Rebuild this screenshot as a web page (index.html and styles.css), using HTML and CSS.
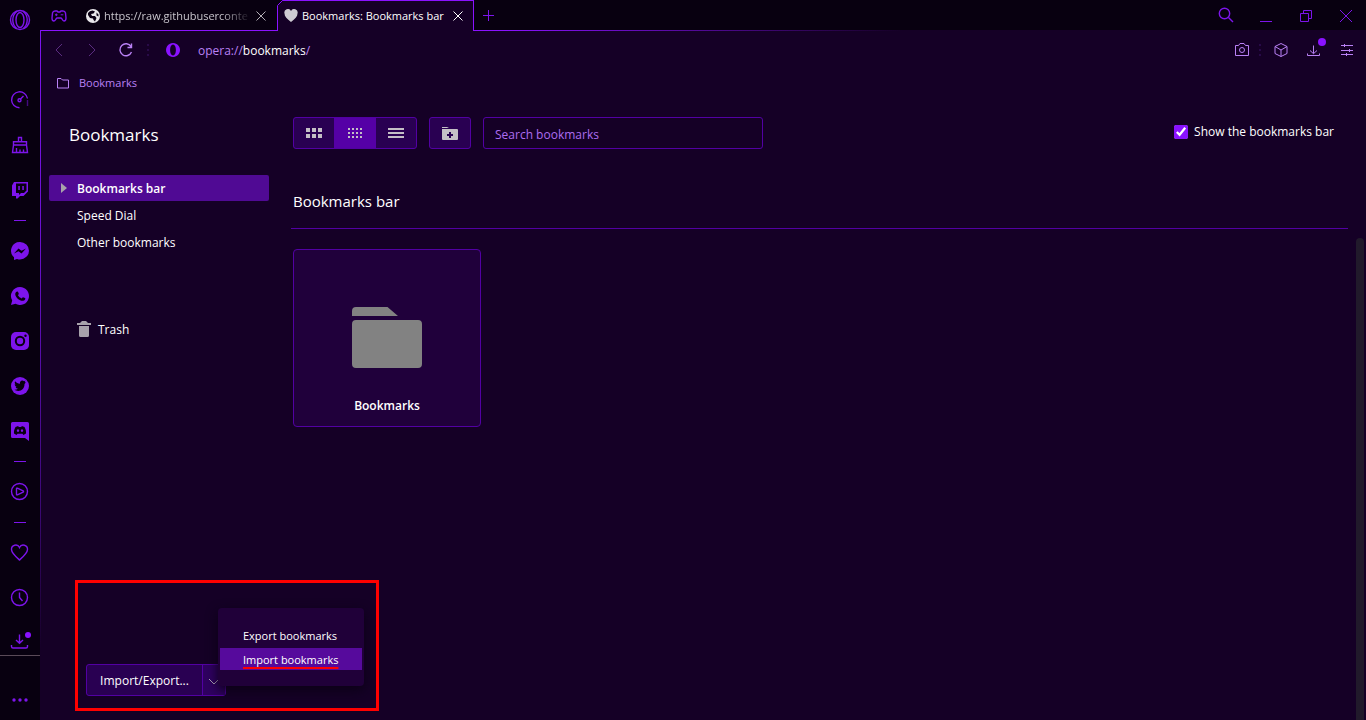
FILE: index.html
```html
<!DOCTYPE html>
<html lang="en">
<head>
<meta charset="utf-8">
<title>Bookmarks: Bookmarks bar</title>
<link rel="stylesheet" href="styles.css">
</head>
<body>
<div class="browser">
  <aside class="rail" aria-label="Sidebar">
    <button class="rail-btn rail-logo" aria-label="Opera menu"><svg width="22" height="22" viewBox="0 0 22 22"><circle cx="11" cy="11" r="9.500"/><ellipse cx="11" cy="11" rx="4" ry="7.500"/><path d="M8 2.200C5 4.500 3.800 7.500 3.800 11S5 17.500 8 19.800M14 2.200c3 2.300 4.200 5.300 4.200 8.800s-1.200 6.500-4.200 8.800"/></svg></button>
    <button class="rail-btn" aria-label="GX Control"><svg width="20" height="20" viewBox="0 0 20 20"><path d="M9.500 17.800A8 8 0 1 1 17.500 8.500M10.500 9l3-3"/><circle cx="9.500" cy="10.200" r="1.500"/><path d="M17.500 10.500v5" stroke-dasharray="1 1"/></svg></button>
    <button class="rail-btn" aria-label="GX Cleaner"><svg width="20" height="20" viewBox="0 0 20 20"><path d="M8.500 6.500V2.500h3v4M3.500 10V6.700h13V10zM3.500 10l-1 7.500h15L16.500 10M6.500 13v4.500M10 14.500v3M13.500 14.500v3"/></svg></button>
    <button class="rail-btn" aria-label="Twitch"><svg class="solid" width="20" height="20" viewBox="0 0 20 20"><path fill-rule="evenodd" d="M4 2h14v9.500L13.500 16H10l-2.500 2.500H6V16H2V5.500zM6 3.500V13h3v2l2-2h3l2.500-2.500v-7zM8.300 6h1.500v4H8.300zM12.300 6h1.500v4h-1.500z"/></svg></button>
    <span class="rail-sep"></span>
    <button class="rail-btn" aria-label="Messenger"><svg class="solid" width="20" height="20" viewBox="0 0 20 20"><path d="M10 1a9 8.700 0 0 1 0 17.400q-1.500 0-3-.5L4 19v-2.800A8.700 8.700 0 0 1 10 1z"/><path class="cut" d="M4 12.500l4.500-5 3 2.200L16 7.500l-4.500 5-3-2.200z"/></svg></button>
    <button class="rail-btn" aria-label="WhatsApp"><svg class="solid" width="20" height="20" viewBox="0 0 20 20"><path d="M10 1a9 9 0 1 1-4.500 16.800L1 19l1.200-4.500A9 9 0 0 1 10 1z"/><path class="cut" d="M7 5.500c.7-.2 1 .2 1.200.8l.6 1.500c.1.500-.8 1.200-.8 1.400.8 1.500 2 2.500 3.600 3.200.4 0 .9-1.200 1.400-1.200l2 .9c.5.300.3 1-.1 1.700-1 1.500-3.200 1.200-4.800.4-2-1-3.500-2.500-4.500-4.500-.6-1.500-.5-3.600 1.400-4.200z"/></svg></button>
    <button class="rail-btn" aria-label="Instagram"><svg class="solid" width="20" height="20" viewBox="0 0 20 20"><rect x="1" y="1" width="18" height="18" rx="5"/><circle class="cut" cx="10" cy="10" r="5.200"/><circle cx="10" cy="10" r="3.200"/><circle class="cut" cx="15.500" cy="4.700" r="1.200"/></svg></button>
    <button class="rail-btn" aria-label="Twitter"><svg class="solid" width="20" height="20" viewBox="0 0 20 20"><circle cx="10" cy="10" r="9"/><path class="cut" d="M15.800 6.500l-1.300 1.400c.1 4-2.500 7-6.300 7-1.500 0-2.800-.4-3.900-1.100 1.400.1 2.600-.2 3.700-1-1.200-.1-2-.8-2.300-1.800h1c-1.300-.5-2-1.500-2-2.700l1 .3c-1-1-1.300-2.200-.6-3.400 1.300 1.600 2.800 2.400 4.900 2.500-.4-2 .8-3.300 2.300-3.300.7 0 1.300.3 1.700.8l1.600-.6-.9 1.300z"/></svg></button>
    <button class="rail-btn" aria-label="Discord"><svg class="solid" width="20" height="20" viewBox="0 0 20 20"><path d="M2.500 1h15Q19 1 19 2.500V20l-4-3H2.500Q1 17 1 15.500v-13Q1 1 2.500 1z"/><path class="cut" fill-rule="evenodd" d="M5.500 6l2.700-1 .5.900h2.600l.5-.9 2.700 1c1.300 2.300 1.700 4.300 1.500 6.500L13.500 14l-1-1.200h-5L6.500 14 4 12.500C3.800 10.300 4.200 8.300 5.500 6zM8 8.300a1.200 1.300 0 1 0 .01 0zM12 8.300a1.200 1.300 0 1 0 .01 0z"/></svg></button>
    <span class="rail-sep"></span>
    <button class="rail-btn" aria-label="Player"><svg width="20" height="20" viewBox="0 0 20 20"><circle cx="9.500" cy="9.500" r="8"/><path d="M6.500 6.700v5.600q0 .9.900.5l5.700-2.700q.9-.6 0-1.200L7.400 6.200Q6.500 5.800 6.500 6.700z"/></svg></button>
    <span class="rail-sep"></span>
    <button class="rail-btn" aria-label="Bookmarks"><svg width="20" height="20" viewBox="0 0 20 20"><path d="M9.500 17C5 13 1.500 10 1.500 6.500A4.200 4.200 0 0 1 9.500 4.500a4.200 4.200 0 0 1 8 2c0 3.500-3.500 6.500-8 10.500z"/></svg></button>
    <button class="rail-btn" aria-label="History"><svg width="20" height="20" viewBox="0 0 20 20"><circle cx="9.500" cy="9.500" r="8"/><path d="M9.500 4.500v5l3 3.500"/></svg></button>
    <button class="rail-btn rail-down" aria-label="Downloads"><svg width="22" height="20" viewBox="0 0 22 20"><path d="M10.500 4.500v8.500M7 10l3.500 3.300 3.500-3.300M2.500 15v1.500q0 1.500 1.500 1.500h13q1.500 0 1.500-1.500v-1.500"/><circle class="dot" cx="19" cy="5" r="3"/></svg></button>
    <button class="rail-btn rail-more" aria-label="Sidebar setup"><svg class="solid" width="20" height="20" viewBox="0 0 20 20"><circle cx="4" cy="10" r="1.700"/><circle cx="10" cy="10" r="1.700"/><circle cx="16" cy="10" r="1.700"/></svg></button>
  </aside>

  <div class="window">
    <header class="strip">
      <button class="icon-btn bold corner" aria-label="GX Corner"><svg width="16" height="14" viewBox="0 0 16 14"><path d="M4 2h2l1 1h2l1-1h2q2 0 2.500 2l.5 5q0 3-2 3-1 0-2-2l-1-1H6l-1 1q-1 2-2 2-2 0-2-3l.5-5Q2 2 4 2z"/><path d="M4 5.800h2.600M5.300 4.500v2.600M9.700 5.800h2.600" stroke-width="1"/></svg></button>
      <div class="tab">
        <svg width="14" height="14" viewBox="0 0 14 14"><circle cx="7" cy="7" r="7" fill="#e8e6ea"/><path d="M2 4Q3.500 1.500 6.500 1.500L9 2.500 7.500 4.500 5 5l1 2H9l1.500 2L9 12.500 7.500 11 7 9.500 4 9 2 6zM10.500 3.500l2 2v2l-2-1z" fill="#0a0014"/></svg>
        <a class="tab-title fade" href="#raw">https://raw.githubuserconte</a>
        <button class="icon-btn pale" aria-label="Close tab"><svg width="12" height="12" viewBox="0 0 12 12"><path d="M1.500 1.500l9 9M10.500 1.500l-9 9"/></svg></button>
      </div>
      <div class="tab active">
        <svg class="tab-edge" width="7" height="31" viewBox="0 0 7 31"><path class="mask" d="M0 0h6L1 5v26H0z"/><path d="M.5 31V5.500l5-5H7"/></svg>
        <svg width="14" height="14" viewBox="0 0 14 14"><path d="M7 13C3 10 .5 7.500.5 4.500A3.500 3.500 0 0 1 7 2a3.500 3.500 0 0 1 6.500 2.500c0 3-2.500 5.500-6.500 8.500z" fill="#cfcbd3"/></svg>
        <a class="tab-title" href="#bookmarks">Bookmarks: Bookmarks bar</a>
        <button class="icon-btn white" aria-label="Close tab"><svg width="12" height="12" viewBox="0 0 12 12"><path d="M1.500 1.500l9 9M10.500 1.500l-9 9"/></svg></button>
      </div>
      <button class="icon-btn new-tab" aria-label="New tab"><svg width="12" height="12" viewBox="0 0 12 12"><path d="M6.500 0v11M1 5.500h11"/></svg></button>
      <div class="win-controls">
        <button class="icon-btn bold" aria-label="Search tabs"><svg width="16" height="18" viewBox="0 0 16 18"><circle cx="6.500" cy="6.500" r="5.200"/><path d="M10.500 10.500l4.500 4.500"/></svg></button>
        <button class="icon-btn" aria-label="Minimize"><svg width="12" height="12" viewBox="0 0 12 12"><path d="M0 11.500h12"/></svg></button>
        <button class="icon-btn" aria-label="Restore"><svg width="12" height="12" viewBox="0 0 12 12"><path d="M.5 3.500h8v8h-8zM3.500 3.500v-3h8v8h-3"/></svg></button>
        <button class="icon-btn" aria-label="Close"><svg width="12" height="12" viewBox="0 0 12 12"><path d="M0 0l12 12M12 0L0 12"/></svg></button>
      </div>
    </header>

    <div class="address">
      <button class="icon-btn dim" aria-label="Back"><svg width="14" height="14" viewBox="0 0 14 14"><path d="M10 1L4 7l6 6"/></svg></button>
      <button class="icon-btn dim" aria-label="Forward"><svg width="14" height="14" viewBox="0 0 14 14"><path d="M4 1l6 6-6 6"/></svg></button>
      <button class="icon-btn light bold reload" aria-label="Reload"><svg width="16" height="16" viewBox="0 0 16 16"><path d="M13 4.500A6 6 0 1 0 13.500 10M13.500 1.500v4H9.500"/></svg></button>
      <svg class="grip" width="2" height="12" viewBox="0 0 2 12"><path d="M0 1h2M0 6h2M0 11h2"/></svg>
      <svg class="site" width="14" height="14" viewBox="0 0 14 14"><path fill-rule="evenodd" d="M7 0a7 7 0 1 0 .01 0zM7 1.500c1.700 0 2.900 2.300 2.900 5.500S8.700 12.500 7 12.500 4.100 10.200 4.100 7 5.300 1.500 7 1.500z"/></svg>
      <div class="url" role="textbox" aria-label="Address">opera://<strong>bookmarks</strong>/</div>
      <div class="tools">
        <button class="icon-btn light" aria-label="Snapshot"><svg width="16" height="16" viewBox="0 0 16 16"><path d="M1.500 3.500h3l1.500-2h4l1.500 2h3v10h-13z"/><circle cx="8" cy="8" r="2.500"/></svg></button>
        <svg class="grip" width="2" height="12" viewBox="0 0 2 12"><path d="M0 1h2M0 6h2M0 11h2"/></svg>
        <button class="icon-btn light cube" aria-label="Extensions"><svg width="16" height="16" viewBox="0 0 16 16"><path d="M8 1.500l6 3v7L8 14.500l-6-3v-7zM2 4.500L8 8l6-3.500M8 8v6.500"/></svg></button>
        <button class="icon-btn light" aria-label="Downloads"><svg class="badged" width="18" height="20" viewBox="0 0 18 20"><path d="M7.500 5.500v8M4 10.500l3.500 3.200 3.500-3.200M1.500 13.500v2h12v-2"/><circle class="dot" cx="16" cy="2" r="4"/></svg></button>
        <button class="icon-btn light" aria-label="Easy setup"><svg width="14" height="14" viewBox="0 0 14 14"><path d="M1 2.500h12M1 7.500h12M1 11.500h12M4.500 1v3M9.500 6v3M6.500 10v3"/></svg></button>
      </div>
    </div>

    <nav class="bm-bar" aria-label="Bookmarks bar">
      <a href="#folder"><svg width="14" height="12" viewBox="0 0 14 12"><path d="M1.500 1.500h3.500l1.500 1.500h6v8h-11z"/></svg>Bookmarks</a>
    </nav>

    <div class="page">
      <nav class="folders">
        <h1>Bookmarks</h1>
        <ul>
          <li><a class="selected" href="#bar"><svg width="6" height="10" viewBox="0 0 6 10"><path d="M0 0l6 5-6 5z"/></svg><span>Bookmarks bar</span></a></li>
          <li><a href="#speed"><span>Speed Dial</span></a></li>
          <li><a href="#other"><span>Other bookmarks</span></a></li>
        </ul>
        <a class="trash" href="#trash"><svg width="14" height="16" viewBox="0 0 14 16"><path d="M0 2h3l2-2h4l2 2h3v2H0zM2 5h10v9.500q0 1.500-1.500 1.500h-7Q2 16 2 14.500z"/></svg><span>Trash</span></a>
        <div class="transfer">
          <div class="split">
            <button class="split-main">Import/Export...</button>
            <button class="split-arrow" aria-label="Open menu"><svg width="12" height="8" viewBox="0 0 12 8"><path d="M1 1l5 5 5-5"/></svg></button>
          </div>
          <div class="menu">
            <button>Export bookmarks</button>
            <button class="hover"><span>Import bookmarks</span></button>
          </div>
        </div>
      </nav>

      <main class="content">
        <div class="toolbar">
          <div class="views">
            <button aria-label="Large tiles"><svg width="16" height="10" viewBox="0 0 16 10"><path d="M0 0h4v4H0zM6 0h4v4H6zM12 0h4v4h-4zM0 6h4v4H0zM6 6h4v4H6zM12 6h4v4h-4z"/></svg></button>
            <button class="on" aria-label="Small tiles"><svg width="14" height="10" viewBox="0 0 14 10"><path d="M0 1h14M0 5h14M0 9h14" fill="none" stroke="#c4bfc6" stroke-width="2" stroke-dasharray="2 2"/></svg></button>
            <button aria-label="List"><svg width="16" height="10" viewBox="0 0 16 10"><path d="M0 0h16v2H0zM0 4h16v2H0zM0 8h16v2H0z"/></svg></button>
          </div>
          <button class="add" aria-label="Add folder"><svg width="16" height="13" viewBox="0 0 16 13"><path fill-rule="evenodd" d="M0 0h5l2 1H0zM0 2h15q1 0 1 1v9q0 1-1 1H1q-1 0-1-1zM7 5v2H5v2h2v2h2V9h2V7H9V5z"/></svg></button>
          <input class="search" type="search" placeholder="Search bookmarks" aria-label="Search bookmarks">
          <label class="show"><input type="checkbox" checked>Show the bookmarks bar</label>
        </div>
        <h2>Bookmarks bar</h2>
        <a class="card" href="#folder">
          <svg width="70" height="62" viewBox="0 0 70 62"><path d="M0 9V4q0-4 4-4h31.500L46 9zM4 13h62q4 0 4 4v40q0 4-4 4H4q-4 0-4-4V17q0-4 4-4z"/></svg>
          <span>Bookmarks</span>
        </a>
      </main>
      <div class="scrollbar"></div>
    </div>
  </div>
</div>
</body>
</html>
```
FILE: styles.css
```css
:root {
  --accent: #7d14eb;
  --accent-bright: #8a12ff;
  --line: #5200a3;
  --light: #b981f5;
  --bg: #150026;
  --dark: #080010;
  --button: #290052;
}
* { box-sizing: border-box; }
body {
  margin: 0;
  background: var(--bg);
  color: #fff;
  font: 12px/18px "Open Sans", "Noto Sans", sans-serif;
}
button {
  padding: 0;
  border: 0;
  background: none;
  color: inherit;
  font: inherit;
}
a { color: inherit; text-decoration: none; }
h1, h2, ul { margin: 0; padding: 0; font-weight: 400; list-style: none; }
svg { display: block; flex: none; }

.browser { display: flex; min-height: 100vh; }

/* Left rail */
.rail {
  display: flex;
  flex-direction: column;
  flex: none;
  width: 40px;
  background: var(--dark);
}
.rail-btn {
  display: flex;
  align-items: center;
  justify-content: center;
  flex: none;
  height: 45px;
}
.rail svg, .icon-btn svg { fill: none; stroke: var(--accent); stroke-width: 1; }
.rail svg { stroke-width: 1.4; }
.icon-btn.bold svg { stroke-width: 1.4; }
.rail svg.solid { fill: var(--accent); stroke: none; }
.rail .cut { fill: var(--dark); }
.rail .dot, .icon-btn .dot { fill: var(--accent-bright); stroke: none; }
.badged { overflow: visible; }
.rail-logo { height: 40px; margin-bottom: 37px; }
.rail-sep {
  flex: none;
  width: 12px;
  height: 1px;
  margin: 8px auto 7px;
  background: var(--accent);
}
.rail-down { height: 36px; padding-top: 4px; border-bottom: 1px solid #5a4a58; }
.rail-more { height: 40px; margin-top: auto; }

/* Window */
.window { display: flex; flex: 1; flex-direction: column; min-width: 0; position: relative; }
.window::before {
  content: "";
  position: absolute;
  top: 30px;
  bottom: 0;
  left: 0;
  width: 1px;
  background: linear-gradient(#7d14f0, #6a10d0 30%, #3a0872 70%, #150026 90%);
}
.strip {
  display: flex;
  align-items: center;
  height: 31px;
  background:
    linear-gradient(90deg, #8a12ff 35%, #150026 65%) bottom / 100% 1px no-repeat,
    var(--dark);
}
.icon-btn { display: flex; align-items: center; justify-content: center; flex: none; }
.icon-btn.light svg { stroke: var(--light); }
.icon-btn.pale svg { stroke: #b5b0b8; }
.icon-btn.white svg { stroke: #fff; }
.icon-btn.dim svg { stroke: #5a2c80; }
.corner { width: 38px; }
.tab {
  display: flex;
  align-items: center;
  gap: 4px;
  width: 199px;
  height: 31px;
  padding: 0 10px 0 8px;
  color: #c8c4cc;
  font-size: 11px;
}
.tab-title { flex: 1; white-space: nowrap; }
.fade { mask-image: linear-gradient(90deg, #000 80%, transparent); }
.tab.active {
  position: relative;
  width: 197px;
  padding: 0 9px 0 7px;
  border: solid var(--accent-bright);
  border-width: 1px 1px 0 0;
  background: var(--bg);
  color: #fff;
}
.tab-edge { position: absolute; top: -1px; left: 0; fill: none; stroke: var(--accent-bright); }
.tab-edge .mask { fill: var(--dark); stroke: none; }
.new-tab { width: 28px; }
.win-controls { display: flex; margin-left: auto; }
.win-controls .icon-btn { width: 40px; }

.address { display: flex; align-items: center; height: 38px; padding: 0 12px; }
.dim { width: 14px; margin-right: 19px; }
.reload { margin-right: 13px; }
.grip { stroke: #280a48; stroke-width: 2; }
.site { margin: 0 18px 0 17px; fill: var(--accent-bright); }
.url { padding-top: 2px; color: var(--light); }
.url strong { color: #fff; font-weight: 400; }
.tools { display: flex; align-items: center; margin-left: auto; }
.tools .icon-btn { width: 34px; height: 20px; }
.tools .icon-btn:last-child { width: 14px; margin-left: 8px; }
.tools .cube { margin-left: 3px; }

.bm-bar { display: flex; padding: 5px 16px 4px; color: var(--light); font-size: 11px; }
.bm-bar a { display: flex; align-items: center; gap: 9px; }
.bm-bar svg { fill: none; stroke: var(--light); }

/* Bookmarks page */
.page { display: flex; flex: 1; position: relative; }
.folders {
  display: flex;
  flex-direction: column;
  flex: none;
  width: 253px;
  padding: 27px 24px 24px 9px;
}
.folders h1 { padding-left: 20px; font-size: 17px; line-height: 24px; }
.folders ul { display: grid; gap: 1px; margin-top: 28px; }
.folders li a { display: flex; align-items: center; height: 26px; padding-left: 28px; border-radius: 2px; }
.folders li .selected { gap: 10px; padding-left: 12px; background: #500a94; font-weight: 600; }
.folders li span, .trash span { padding-top: 2px; }
.folders svg { fill: #a8a2ab; }
.trash { display: flex; align-items: center; gap: 7px; height: 26px; margin-top: 61px; padding-left: 28px; }

.transfer { position: relative; margin: auto 0 0 37px; }
.transfer::after {
  content: "";
  position: absolute;
  inset: -84px -110px -15px -11px;
  border: 3px solid #f00;
  pointer-events: none;
}
.split {
  display: flex;
  width: 140px;
  height: 32px;
  border: 1px solid var(--line);
  border-radius: 3px;
  background: var(--button);
}
.split-main { flex: 1; padding-top: 2px; }
.split-arrow { display: flex; align-items: center; width: 23px; padding: 3px 0 0 5px; border-left: 1px solid var(--line); background: #2f0060; }
.folders .split-arrow svg { fill: none; stroke: #b0a5b8; }
.menu {
  position: absolute;
  bottom: 10px;
  left: 132px;
  display: flex;
  flex-direction: column;
  width: 146px;
  padding: 16px 2px;
  border-radius: 4px;
  background: #200039;
  box-shadow: 0 4px 12px #0b0016;
  font-size: 11px;
}
.menu button { height: 24px; padding-left: 23px; text-align: left; }
.menu .hover { height: 22px; padding-top: 2px; background: #560a9c; }
.menu span {
  text-decoration: underline 2px #f00;
  text-decoration-skip-ink: none;
  text-underline-offset: 3px;
}

.content { flex: 1; min-width: 0; padding: 21px 18px 24px 0; }
.toolbar { display: flex; gap: 12px; height: 32px; }
.toolbar svg { fill: #c4bfc6; }
.views, .add, .search { border: 1px solid var(--line); border-radius: 3px; background: var(--button); }
.views { display: flex; width: 124px; }
.views button, .add { display: flex; align-items: center; justify-content: center; flex: 1; }
.views .on { flex: none; width: 42px; background: #5500a6; }
.toolbar .add { flex: none; width: 42px; border: 1px solid var(--line); background: var(--button); }
.search { width: 280px; padding: 4px 11px 0; outline: 0; background: transparent; color: #fff; font: inherit; }
.search::placeholder { color: #ad6ef0; opacity: 1; }
.show { display: flex; align-items: center; gap: 6px; margin: -2px 14px 0 auto; }
.show input { width: 14px; height: 14px; margin: 0; accent-color: var(--accent-bright); }
.content h2 {
  margin: 40px 0 20px -2px;
  padding: 0 0 15px 2px;
  border-bottom: 1px solid var(--line);
  font-size: 15px;
  line-height: 24px;
}
.card {
  display: flex;
  flex-direction: column;
  align-items: center;
  width: 188px;
  height: 178px;
  padding-top: 57px;
  border: 1px solid var(--line);
  border-radius: 4px;
  background: #20003b;
  font-weight: 600;
}
.card svg { fill: #828282; }
.card span { margin-top: 28px; }
.scrollbar {
  position: absolute;
  top: 142px;
  right: 2px;
  bottom: 0;
  width: 8px;
  border-radius: 4px 4px 0 0;
  background: #211a2b;
}
```
